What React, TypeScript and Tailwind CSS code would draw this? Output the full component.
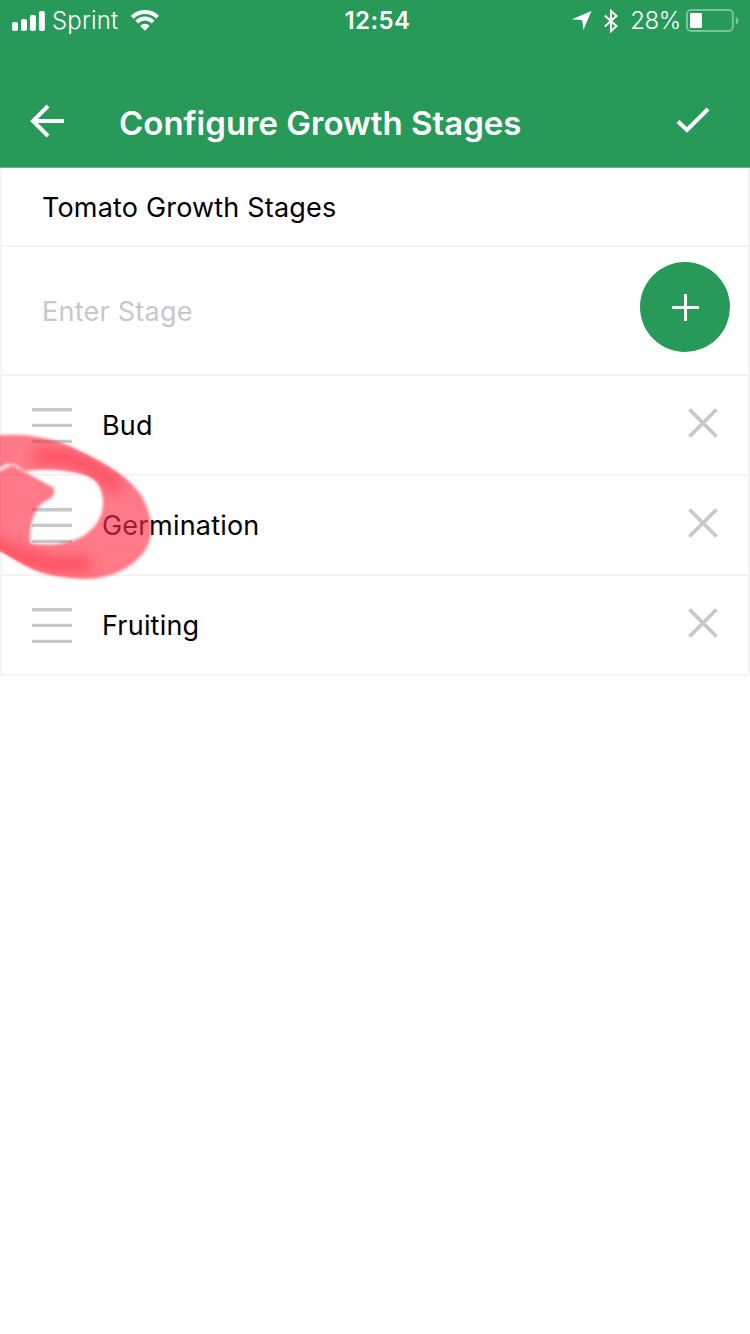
import { useState } from "react";

const initialStages = ["Bud", "Germination", "Fruiting"];

const markerOutline =
  "M-10 436C25 432 55 438 80 451C105 463 128 476 141 495C152 514 155 533 146 549C134 568 110 579 86 579C64 578 42 575 28 567C16 561 8 555 -10 546V476L12 465L54 488C55 496 52 498 44 502C34 509 29 524 30 543C52 547 72 543 85 535C98 525 103 515 103 502C102 487 98 480 85 475C66 469 42 469 25 471L14 464L8 464L-10 471Z";

function StatusBar() {
  return (
    <div className="flex h-[41px] items-center pl-3 pr-[10px] text-[24px] leading-10">
      <svg width="33" height="20" viewBox="0 0 33 20" fill="currentColor">
        <rect x="0" y="11" width="6" height="9" rx="2" />
        <rect x="9" y="8" width="6" height="12" rx="2" />
        <rect x="18" y="4" width="6" height="16" rx="2" />
        <rect x="27" y="0" width="6" height="20" rx="2" />
      </svg>
      <span className="ml-[7px] w-[68px] whitespace-nowrap pt-px font-light tracking-[0.2px]">Sprint</span>
      <svg className="ml-[11px]" width="28" height="21" viewBox="0 0 28 21" fill="none" stroke="currentColor" strokeWidth="4">
        <path d="M1.3 7.2C8.4 0.2 19.6 0.2 26.7 7.2" />
        <path d="M5.8 12C10.6 7.4 17.4 7.4 22.2 12" />
        <path d="M9.3 15.9C12.2 13.2 15.8 13.2 18.7 15.9L14 20.8Z" fill="currentColor" stroke="none" />
      </svg>
      <span className="ml-[186px] w-[66px] whitespace-nowrap pt-px font-semibold tracking-[0.4px]">12:54</span>
      <svg className="ml-[162px]" width="20" height="21" viewBox="0 0 21 21" fill="currentColor">
        <path d="M20.5 0.5L12 20.5L10.8 10.2L0 9.2Z" />
      </svg>
      <svg className="ml-3" width="14" height="24" viewBox="0 0 14 24" fill="none" stroke="currentColor" strokeWidth="2">
        <path d="M0.8 6.5L12.5 17L7 22.2V1.8L12.5 7L0.8 17.5" />
      </svg>
      <span className="ml-3 w-[49px] whitespace-nowrap pt-px font-light tracking-[-0.4px]">28%</span>
      <svg className="ml-[7px]" width="54" height="24" viewBox="0 0 54 24">
        <rect x="1" y="1" width="46" height="21" rx="4" fill="none" stroke="#7cc39a" strokeWidth="2" />
        <rect x="4" y="4" width="12" height="15" rx="1" fill="white" />
        <path d="M50 8C53.5 9 53.5 14.5 50 15.5Z" fill="#7cc39a" />
      </svg>
    </div>
  );
}

function Header() {
  return (
    <header className="h-[168px] border-b border-[#6faf88] bg-[#279958] text-white">
      <StatusBar />
      <div className="flex h-[126px] items-center pl-[30px] pr-[40px] pt-[37px]">
        <svg className="mb-1" width="34" height="34" viewBox="0 0 34 34" fill="none" stroke="white" strokeWidth="4">
          <path d="M18 2L3 17L18 32M3 17H34" />
        </svg>
        <h1 className="ml-[55px] whitespace-nowrap text-[33px] font-semibold leading-10">
          Configure Growth Stages
        </h1>
        <svg className="mb-[5px] ml-auto" width="34" height="26" viewBox="0 0 34 26" fill="none" stroke="white" strokeWidth="4">
          <path d="M2 14.5L11 23L32 2" />
        </svg>
      </div>
    </header>
  );
}

function StageRow({ name, onRemove }: { name: string; onRemove: () => void }) {
  return (
    <li className="flex h-[100px] items-center border-x-2 border-b-2 border-[#f4f4f4] px-[30px] pt-[2px]">
      <svg width="40" height="40" viewBox="0 0 40 40" stroke="#c8c8c8" strokeWidth="3.4">
        <path d="M0 3.7H40M0 19.4H40M0 35.4H40" />
      </svg>
      <span className="ml-[30px] whitespace-nowrap text-[27px] leading-10 tracking-[0.2px]">{name}</span>
      <button type="button" aria-label={`Remove ${name}`} className="mb-[6px] ml-auto" onClick={onRemove}>
        <svg width="30" height="30" viewBox="0 0 30 30" stroke="#c8c8c8" strokeWidth="3.8">
          <path d="M1.5 1.5L28.5 28.5M28.5 1.5L1.5 28.5" />
        </svg>
      </button>
    </li>
  );
}

// Translucent marker stroke drawn around the second drag handle
function MarkerCircle() {
  return (
    <svg className="pointer-events-none absolute left-0 top-[425px]" width="160" height="165" viewBox="0 425 160 165">
      <defs>
        <filter id="soft" x="-20%" y="-20%" width="140%" height="140%">
          <feGaussianBlur stdDeviation="1.4" />
        </filter>
        <filter id="shade" filterUnits="userSpaceOnUse" x="-80" y="380" width="300" height="260">
          <feGaussianBlur stdDeviation="7" />
        </filter>
        <clipPath id="ring">
          <path d={markerOutline} />
        </clipPath>
      </defs>
      <path filter="url(#soft)" fill="#ff2c42" fillOpacity="0.63" d={markerOutline} />
      <g clipPath="url(#ring)">
        <path
          filter="url(#shade)"
          fill="none"
          stroke="#ff3048"
          strokeLinecap="round"
          strokeOpacity="0.6"
          strokeWidth="16"
          d="M40 457C66 454 92 464 114 484M-40 526C15 558 45 568 84 564"
        />
      </g>
    </svg>
  );
}

export default function App() {
  const [stages, setStages] = useState(initialStages);
  const [draft, setDraft] = useState("");

  const addStage = () => {
    if (!draft.trim()) {
      return;
    }
    setStages([...stages, draft.trim()]);
    setDraft("");
  };

  return (
    <div className="relative h-[1334px] w-[750px] overflow-hidden bg-white font-['Inter',sans-serif] text-black">
      <Header />
      <div className="flex h-[79px] items-center border-x-2 border-b-2 border-[#f4f4f4] pl-10 pt-[2px]">
        <h2 className="whitespace-nowrap text-[27px] leading-10 tracking-[0.18px]">Tomato Growth Stages</h2>
      </div>
      <div className="flex h-[129px] items-center border-x-2 border-b-2 border-[#f4f4f4] pl-10 pr-[18px] pt-[2px]">
        <input
          className="min-w-0 flex-1 bg-transparent text-[27px] leading-10 tracking-[0.25px] outline-none placeholder:text-[#c7c7cd]"
          placeholder="Enter Stage"
          value={draft}
          onChange={(e) => setDraft(e.target.value)}
        />
        <button
          type="button"
          aria-label="Add stage"
          className="mb-[9px] flex size-[90px] items-center justify-center rounded-full bg-[#279958]"
          onClick={addStage}
        >
          <svg className="ml-px mt-px" width="27" height="27" viewBox="0 0 27 27" stroke="white" strokeWidth="3">
            <path d="M13.5 0V27M0 13.5H27" />
          </svg>
        </button>
      </div>
      <ul>
        {stages.map((stage, index) => (
          <StageRow key={stage} name={stage} onRemove={() => setStages(stages.filter((_, i) => i !== index))} />
        ))}
      </ul>
      <MarkerCircle />
    </div>
  );
}
